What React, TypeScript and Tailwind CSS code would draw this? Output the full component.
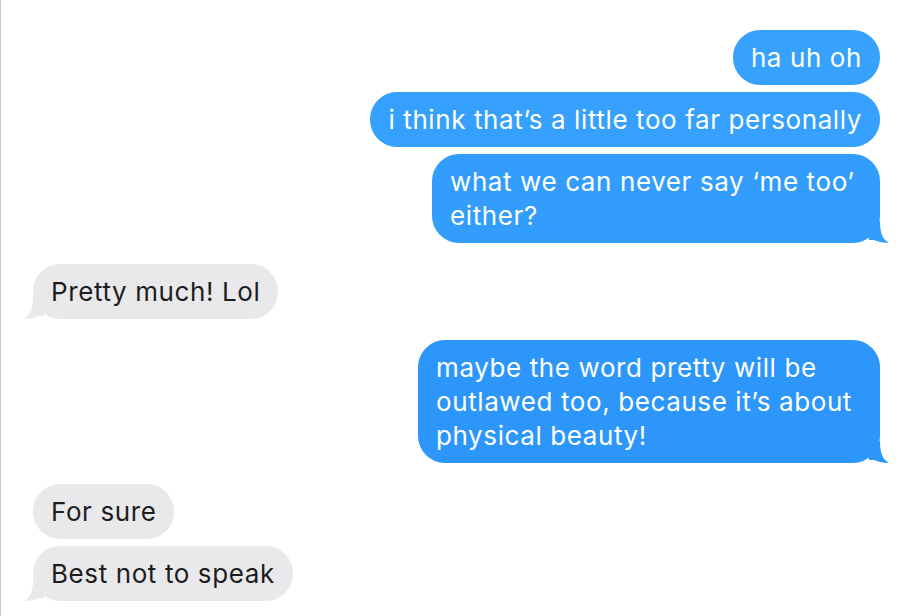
import React from "react";

type Msg = { me: boolean; text: string; tail?: boolean; gap?: boolean; color?: string; width?: string };

const messages: Msg[] = [
  { me: true, text: "ha uh oh", color: "bg-[#37a2fd]" },
  { me: true, text: "i think that’s a little too far personally", color: "bg-[#35a0fd]" },
  { me: true, text: "what we can never say ‘me too’ either?", tail: true, color: "bg-[#329dfc]", width: "w-[448px]" },
  { me: false, text: "Pretty much! Lol", tail: true, gap: true },
  {
    me: true,
    text: "maybe the word pretty will be outlawed too, because it’s about physical beauty!",
    tail: true,
    gap: true,
    color: "bg-[#2c96fb]",
    width: "w-[462px]",
  },
  { me: false, text: "For sure", gap: true },
  { me: false, text: "Best not to speak", tail: true },
];

function Tail({ me, fill }: { me: boolean; fill: string }) {
  if (me) {
    return (
      <svg className="absolute bottom-0 right-[-9px]" width="20" height="22" viewBox="0 0 20 22">
        <path d="M0 0 L11 0 C11 11 13 18 20 22 C15 22 9 21 5 19 L0 19 Z" fill={fill} />
      </svg>
    );
  }
  return (
    <svg className="absolute bottom-0 left-[-9px]" width="20" height="22" viewBox="0 0 20 22">
      <path d="M20 0 L9 0 C9 11 7 18 0 22 C5 22 11 21 15 19 L20 19 Z" fill={fill} />
    </svg>
  );
}

const tailFill: Record<string, string> = {
  "bg-[#329dfc]": "#329dfc",
  "bg-[#2c96fb]": "#2c96fb",
};

export default function App() {
  return (
    <div className="w-[904px] h-[616px] overflow-hidden bg-white border-l border-[#c8c8c8] pt-[30px] pl-[32px] pr-[24px] flex flex-col font-['Inter',sans-serif] text-[26px] leading-[34px] tracking-[0.6px]">
      {messages.map((m, i) => (
        <div
          key={i}
          className={`flex ${m.me ? "justify-end" : "justify-start"} ${i === 0 ? "" : m.gap ? "mt-[21px]" : "mt-[7px]"}`}
        >
          <div
            className={`relative rounded-[27px] px-[18px] py-[10.5px] ${m.width ?? ""} ${
              m.me ? `${m.color} text-white` : "bg-[#e9e9eb] text-[#1d1d1f]"
            }`}
          >
            {m.tail && <Tail me={m.me} fill={m.me ? tailFill[m.color ?? ""] : "#e9e9eb"} />}
            <span className="relative">{m.text}</span>
          </div>
        </div>
      ))}
    </div>
  );
}
